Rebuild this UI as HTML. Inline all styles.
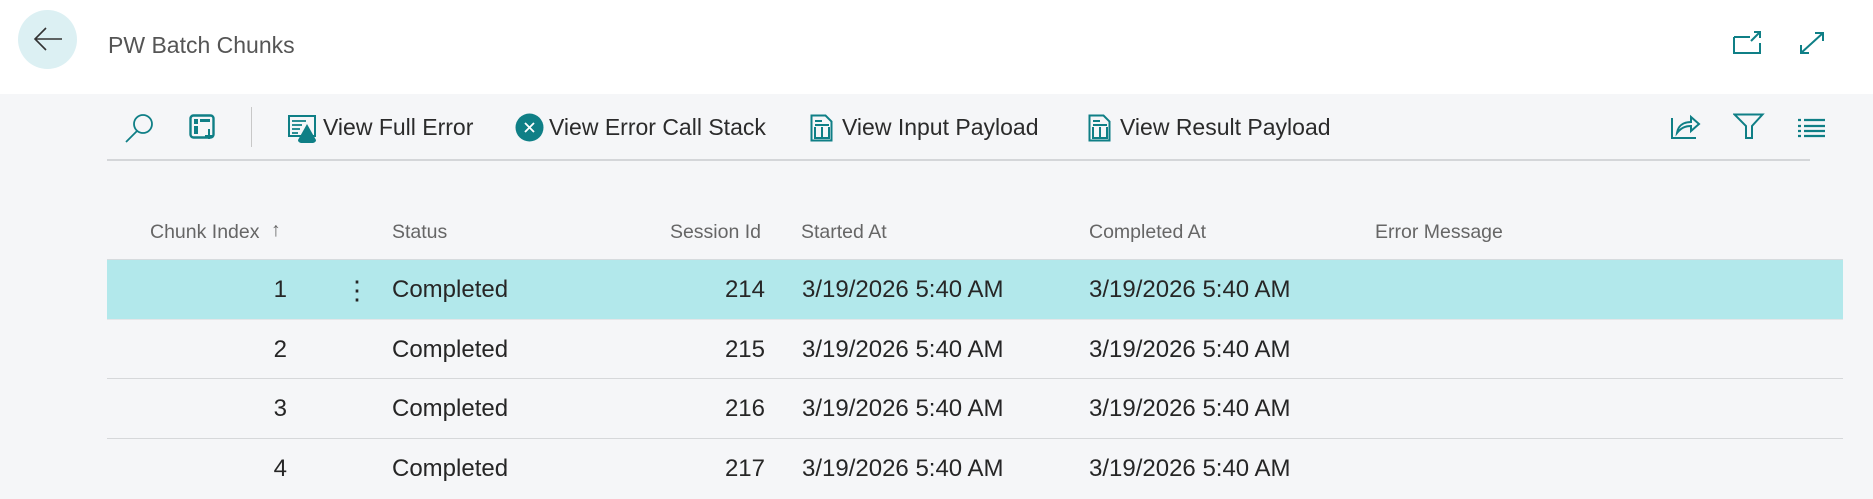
<!DOCTYPE html>
<html><head><meta charset="utf-8"><style>
*{margin:0;padding:0;box-sizing:border-box}
body{width:1873px;height:491px;overflow:hidden;background:#f5f6f8;font-family:"Liberation Sans",sans-serif;position:relative;color:#212121}
.abs{position:absolute;white-space:nowrap}
.hdr{position:absolute;left:0;top:0;width:1873px;height:94px;background:#fff}
.back{position:absolute;left:18px;top:10px;width:59px;height:59px;border-radius:50%;background:#dcf0f3}
.tb{font-size:23px;color:#2b2b2b;top:114px;line-height:26px}
.ch{font-size:19.5px;color:#666;top:220px;line-height:24px}
.row{position:absolute;left:107px;width:1736px;height:60px}
.cell{position:absolute;font-size:24px;line-height:28px;top:16px;white-space:nowrap;color:#262626}
.r{text-align:right}
svg{position:absolute}
</style></head><body>
<div class="hdr"></div>
<div class="back"></div>
<svg style="left:33px;top:25px" width="30" height="28" viewBox="0 0 30 28"><path d="M29 14H2M13 3L2 14l11 11" fill="none" stroke="#333" stroke-width="1.6"/></svg>
<div class="abs" style="left:108px;top:32px;font-size:23px;color:#555">PW Batch Chunks</div>
<svg style="left:1733px;top:31px" width="30" height="24" viewBox="0 0 30 24"><path d="M1 6h16M1 6v16h26V12M18 10L27 1M21 1h6v6" fill="none" stroke="#0f7f86" stroke-width="2"/></svg>
<svg style="left:1798px;top:30px" width="28" height="26" viewBox="0 0 28 26"><path d="M3 23L25 3M17 3h8v8M3 15v8h8" fill="none" stroke="#0f7f86" stroke-width="2"/></svg>

<svg style="left:124px;top:112px" width="32" height="32" viewBox="0 0 32 32"><circle cx="19" cy="12" r="9" fill="none" stroke="#0f7f86" stroke-width="1.8"/><path d="M13.5 18.5L2 30" stroke="#0f7f86" stroke-width="1.8"/></svg>
<svg style="left:189px;top:114px" width="30" height="28" viewBox="0 0 30 28"><rect x="1.5" y="1.5" width="23" height="22" rx="3" fill="none" stroke="#0f7f86" stroke-width="2.4"/><rect x="5" y="5" width="4" height="5" fill="#0f7f86"/><rect x="11" y="5" width="10" height="3" fill="#0f7f86"/><rect x="5" y="12" width="4" height="8" fill="#0f7f86"/><path d="M20 15v10M16 22h8" stroke="#0f7f86" stroke-width="2" fill="none"/></svg>
<div class="abs" style="left:251px;top:107px;width:1px;height:40px;background:#c8c8c8"></div>
<svg style="left:288px;top:115px" width="30" height="28" viewBox="0 0 30 28"><rect x="1" y="1" width="26" height="20" fill="none" stroke="#0f7f86" stroke-width="2"/><path d="M4 6h14M4 10h10M4 14h8M4 18h6" stroke="#0f7f86" stroke-width="1.8"/><path d="M19 9L28 25c0 2-2 3-4 3h-10c-2 0-4-1-4-3z" fill="#0f7f86"/></svg>
<div class="abs tb" style="left:323px">View Full Error</div>
<svg style="left:515px;top:113px" width="29" height="29" viewBox="0 0 29 29"><circle cx="14.5" cy="14.5" r="14" fill="#0f7f86"/><path d="M10 10l9 9M19 10l-9 9" stroke="#fff" stroke-width="1.8"/></svg>
<div class="abs tb" style="left:549px">View Error Call Stack</div>
<svg style="left:810px;top:114px" width="24" height="28" viewBox="0 0 24 28"><path d="M1.5 1.5h14l6 6v19h-20z" fill="none" stroke="#0f7f86" stroke-width="2"/><path d="M5 7h7M5 11h14M5 13v11h14V13M12 13v11" fill="none" stroke="#0f7f86" stroke-width="2"/></svg>
<div class="abs tb" style="left:842px">View Input Payload</div>
<svg style="left:1088px;top:114px" width="24" height="28" viewBox="0 0 24 28"><path d="M1.5 1.5h14l6 6v19h-20z" fill="none" stroke="#0f7f86" stroke-width="2"/><path d="M5 7h7M5 11h14M5 13v11h14V13M12 13v11" fill="none" stroke="#0f7f86" stroke-width="2"/></svg>
<div class="abs tb" style="left:1120px">View Result Payload</div>
<svg style="left:1670px;top:112px" width="32" height="28" viewBox="0 0 32 28"><path d="M2 6v20h24" fill="none" stroke="#0f7f86" stroke-width="2"/><path d="M7 21c1-7 6-11 14-11V5l8 7-8 7v-5c-6 0-10 2-14 7z" fill="none" stroke="#0f7f86" stroke-width="2"/></svg>
<svg style="left:1733px;top:113px" width="32" height="27" viewBox="0 0 32 27"><path d="M1.5 1.5h28L19 13v12h-6V13z" fill="none" stroke="#0f7f86" stroke-width="2"/></svg>
<svg style="left:1798px;top:118px" width="28" height="20" viewBox="0 0 28 20"><path d="M0 2h3M6 2h21M0 8h3M6 8h21M0 13h3M6 13h21M0 18h3M6 18h21" stroke="#0f7f86" stroke-width="2.2"/></svg>
<div class="abs" style="left:107px;top:159px;width:1703px;height:2px;background:#d4d6d9"></div>

<div class="abs ch" style="left:150px">Chunk Index</div>
<div class="abs ch" style="left:271px;top:218px;color:#666">&#8593;</div>
<div class="abs ch" style="left:392px">Status</div>
<div class="abs ch r" style="left:600px;width:161px">Session Id</div>
<div class="abs ch" style="left:801px">Started At</div>
<div class="abs ch" style="left:1089px">Completed At</div>
<div class="abs ch" style="left:1375px">Error Message</div>

<div class="row" style="top:259px;background:#b2e8eb;border-top:1px solid #d6dbde">
 <div class="cell r" style="left:0;width:180px">1</div>
 <div class="cell" style="left:237px;top:16px;font-size:26px">&#8942;</div>
 <div class="cell" style="left:285px">Completed</div><div class="cell r" style="left:500px;width:158px">214</div>
 <div class="cell" style="left:695px">3/19/2026 5:40 AM</div><div class="cell" style="left:982px">3/19/2026 5:40 AM</div>
</div>
<div class="row" style="top:319px;border-top:1px solid #e4e6e8;border-bottom:1px solid #d6d8da">
 <div class="cell r" style="left:0;width:180px">2</div><div class="cell" style="left:285px">Completed</div><div class="cell r" style="left:500px;width:158px">215</div>
 <div class="cell" style="left:695px">3/19/2026 5:40 AM</div><div class="cell" style="left:982px">3/19/2026 5:40 AM</div>
</div>
<div class="row" style="top:379px;border-bottom:1px solid #d6d8da">
 <div class="cell r" style="left:0;width:180px">3</div><div class="cell" style="left:285px">Completed</div><div class="cell r" style="left:500px;width:158px">216</div>
 <div class="cell" style="left:695px">3/19/2026 5:40 AM</div><div class="cell" style="left:982px">3/19/2026 5:40 AM</div>
</div>
<div class="row" style="top:439px">
 <div class="cell r" style="left:0;width:180px">4</div><div class="cell" style="left:285px">Completed</div><div class="cell r" style="left:500px;width:158px">217</div>
 <div class="cell" style="left:695px">3/19/2026 5:40 AM</div><div class="cell" style="left:982px">3/19/2026 5:40 AM</div>
</div>
</body></html>
